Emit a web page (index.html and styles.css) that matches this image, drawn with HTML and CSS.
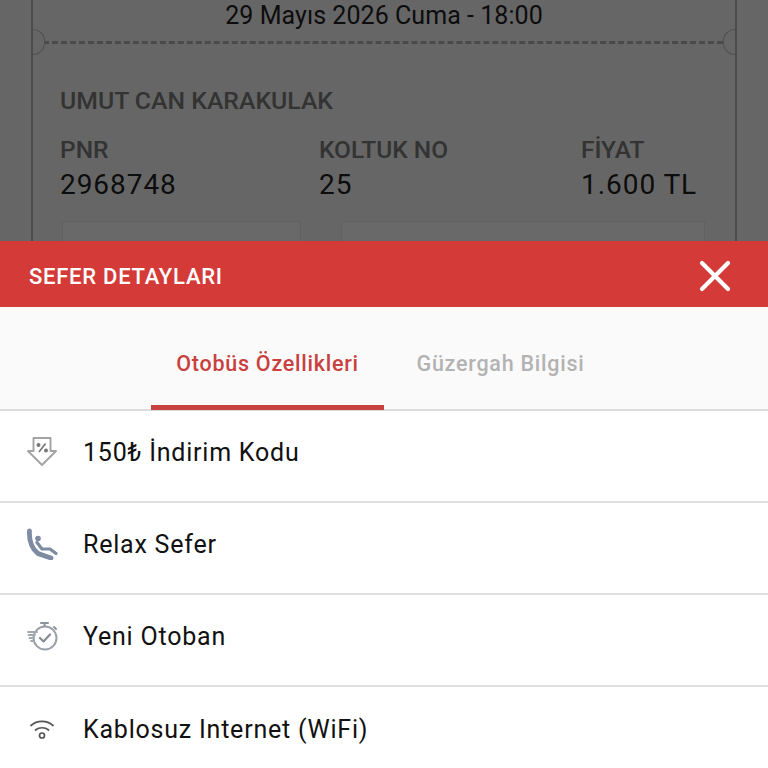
FILE: index.html
```html
<!doctype html>
<html>
<head>
<meta http-equiv="Content-Type" content="text/html; charset=utf-8"/>
<title>Sefer Detayları</title>
<link rel="stylesheet" href="styles.css">
</head>

<body>

<div class="ticket-wrap">
	<div class="ticket">
		<div class="date">29 Mayıs 2026 Cuma - 18:00</div>
		<div class="perforation">
			<span class="notch notch-left"></span>
			<span class="notch notch-right"></span>
		</div>
		<div class="name">UMUT CAN KARAKULAK</div>
		<div class="info">
			<div class="col col-pnr">
				<div class="label">PNR</div>
				<div class="value">2968748</div>
			</div>
			<div class="col col-seat">
				<div class="label">KOLTUK NO</div>
				<div class="value">25</div>
			</div>
			<div class="col col-price">
				<div class="label">FİYAT</div>
				<div class="value">1.600 TL</div>
			</div>
		</div>
		<div class="boxes">
			<div class="box box-a"></div>
			<div class="box box-b"></div>
		</div>
	</div>
</div>

<div class="sheet-head">
	<span class="sheet-title">SEFER DETAYLARI</span>
	<svg class="close" width="34" height="34" viewBox="0 0 34 34">
		<path d="M4 4L30 30M30 4L4 30" stroke="#fff" stroke-width="4.2" stroke-linecap="round" fill="none"/>
	</svg>
</div>

<div class="tabs">
	<div class="tab tab-on">Otobüs Özellikleri</div>
	<div class="tab">Güzergah Bilgisi</div>
</div>

<ul class="list">
	<li>
		<svg class="icon" width="32" height="32" viewBox="0 0 32 32" fill="none">
			<path d="M7.500 2H24.500V15H30L16 29L2 15H7.500Z" stroke="#a3a3a3" stroke-width="1.900" stroke-linejoin="round"/>
			<path d="M19.500 7.500L13 16" stroke="#777" stroke-width="1.700"/>
			<circle cx="12.500" cy="9" r="2" fill="#777"/>
			<circle cx="20" cy="14.500" r="2" fill="#777"/>
		</svg>
		<span>150₺ İndirim Kodu</span>
	</li>
	<li>
		<svg class="icon" width="32" height="32" viewBox="0 0 32 32" fill="none">
			<path d="M3.500 3C3 12 5 20 12 25.500L25 30" stroke="#7d8ba3" stroke-width="4.800" stroke-linecap="round"/>
			<circle cx="12" cy="10.500" r="2.800" fill="#7d8ba3"/>
			<path d="M11 14.500L16 21H24L30 25.500" stroke="#7d8ba3" stroke-width="3.200" stroke-linecap="round" stroke-linejoin="round"/>
		</svg>
		<span>Relax Sefer</span>
	</li>
	<li>
		<svg class="icon" width="32" height="32" viewBox="0 0 32 32" fill="none">
			<circle cx="19" cy="18" r="11.500" stroke="#9aa0a8" stroke-width="2"/>
			<path d="M15 3H22M18.500 3V6M28 7L30 9" stroke="#8d939b" stroke-width="2" stroke-linecap="round"/>
			<path d="M14 18L17.500 21.500L24 14.500" stroke="#868c94" stroke-width="2.200" stroke-linecap="round" stroke-linejoin="round"/>
			<path d="M2 12H11M2.500 15H9M3.500 18H8M5 21H8" stroke="#a3a8af" stroke-width="1.800" stroke-linecap="round"/>
		</svg>
		<span>Yeni Otoban</span>
	</li>
	<li>
		<svg class="icon" width="32" height="32" viewBox="0 0 32 32" fill="none">
			<path d="M5 12.500C11 7 21 7 27 12.500" stroke="#555" stroke-width="1.700" stroke-linecap="round"/>
			<path d="M9.500 17C13 14 19 14 22.500 17" stroke="#555" stroke-width="1.700" stroke-linecap="round"/>
			<circle cx="16" cy="22.500" r="2.500" stroke="#555" stroke-width="1.700"/>
		</svg>
		<span>Kablosuz Internet (WiFi)</span>
	</li>
</ul>

</body>
</html>
```

FILE: styles.css
```css
*{ margin:0; padding:0; list-style:none; box-sizing:border-box;}
html, body{ height:768px; overflow:hidden;}
body{ background:#fff; font-family:Roboto, "Noto Sans", sans-serif; color:#111;}

.ticket-wrap{ height:241px; background:#666; padding:0 31px; overflow:hidden;}
.ticket{ height:300px; border:solid #4c4c4c; border-width:0 2px; color:#0d0d0d;}
.date{ height:43px; padding-top:2px; text-align:center; font-size:25px; line-height:28px; letter-spacing:.05px;}
.perforation{ position:relative; border-top:3px dashed #4a4a4a; margin:-2px 3px 0 10px;}
.notch{ position:absolute; top:-15px; width:12px; height:26px; background:#666; border:1px solid #505050;}
.notch-left{ left:-10px; border-radius:0 14px 14px 0; border-left:0;}
.notch-right{ right:-3px; border-radius:14px 0 0 14px; border-right:0;}
.name{ margin:43px 0 0 27px; font-size:24.800px; line-height:28px; font-weight:500; color:#333;}
.info{ display:flex; margin:21px 0 0 27px;}
.col-pnr{ width:259px;}
.col-seat{ width:262px;}
.label{ font-size:24.500px; line-height:28px; font-weight:500; color:#333;}
.value{ margin-top:7px; font-size:28px; line-height:28px; letter-spacing:.95px;}
.boxes{ display:flex; gap:40px; margin:22px 0 0 29px;}
.box{ height:60px; background:#696969; border:1px solid #616161;}
.box-a{ width:239px;}
.box-b{ width:364px;}

.sheet-head{ display:flex; align-items:center; justify-content:space-between; height:66px; padding:4px 36px 0 29px; background:#d43a38;}
.sheet-title{ color:#fff; font-size:22px; font-weight:500; letter-spacing:.75px;}
.close{ display:block;}

.tabs{ display:flex; height:104px; padding-left:151px; background:#fafafa; border-bottom:2px solid #dcdcdc;}
.tab{ width:233px; height:103px; flex:none; text-align:center; font-size:21.500px; line-height:114px; font-weight:500; letter-spacing:.75px; color:#b3b3b3;}
.tab-on{ color:#c8413f; border-bottom:5px solid #c8413f;}

.list li{ display:flex; align-items:center; height:92px; padding:0 0 8px 26px; border-bottom:2px solid #dfdfdf; font-size:25px; letter-spacing:.78px; color:#111;}
.list li:last-child{ border-bottom:0;}
.icon{ display:block; margin-right:25px; flex:none;}
```
